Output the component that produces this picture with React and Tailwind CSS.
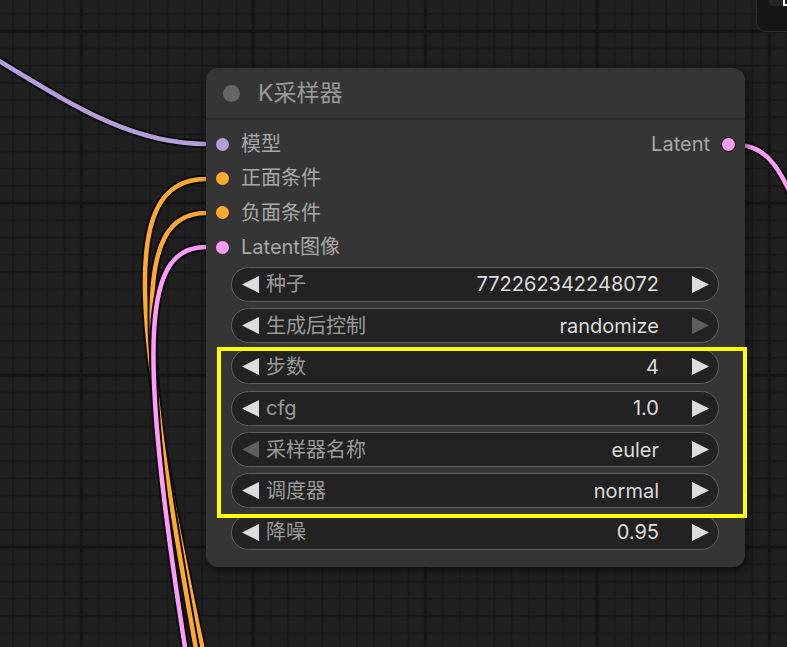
import React from "react";

const FONT = { fontFamily: 'Inter, "Noto Sans CJK SC", sans-serif' };

function LeftArrow({ dim }) {
  return (
    <svg width="17" height="17" viewBox="0 0 17 17" className="shrink-0">
      <polygon points="17,0 17,17 0,8.5" fill={dim ? "#5e5e5e" : "#dddddd"} />
    </svg>
  );
}
function RightArrow({ dim }) {
  return (
    <svg width="17" height="17" viewBox="0 0 17 17" className="shrink-0">
      <polygon points="0,0 0,17 17,8.5" fill={dim ? "#5e5e5e" : "#dddddd"} />
    </svg>
  );
}

function Widget({ label, value, dimLeft, dimRight }) {
  return (
    <div className="h-[35px] w-[488px] ml-[25px] rounded-full border-[1.5px] border-[#5f5f5f] bg-[#222222] flex items-center pl-[10px] pr-[9px]">
      <LeftArrow dim={dimLeft} />
      <span className="ml-[7px] text-[20px] text-[#9a9a9a] leading-none">{label}</span>
      <span className="ml-auto text-[20px] text-[#dddddd] leading-none mr-[33px]">{value}</span>
      <RightArrow dim={dimRight} />
    </div>
  );
}

function Input({ color, label }) {
  return (
    <div className="h-[34.3px] flex items-center pl-[9.5px]">
      <div className="w-[13px] h-[13px] rounded-full" style={{ background: color }} />
      <span className="ml-[12.5px] text-[20px] text-[#a8a8a8] leading-none">{label}</span>
    </div>
  );
}

export default function App() {
  return (
    <div className="relative w-[787px] h-[647px] overflow-hidden bg-[#1f1f1f]" style={FONT}>
      <svg className="absolute inset-0" width="787" height="647">
        <defs>
          <pattern id="minor" x="12" y="13.2" width="17.2" height="17.2" patternUnits="userSpaceOnUse">
            <rect x="0" y="0" width="17.2" height="1.5" fill="#181818" />
            <rect x="0" y="0" width="1.5" height="17.2" fill="#181818" />
          </pattern>
          <pattern id="major" x="79.8" y="29.8" width="172" height="172" patternUnits="userSpaceOnUse">
            <rect x="0" y="0" width="172" height="2.6" fill="#131313" />
            <rect x="0" y="0" width="2.6" height="172" fill="#131313" />
          </pattern>
        </defs>
        <rect width="787" height="647" fill="url(#minor)" />
        <rect width="787" height="647" fill="url(#major)" />
        <g fill="none" strokeLinecap="round">
          <path d="M -80 15 C 40 80, 110 144, 206 144" stroke="#0c0c0c" strokeWidth="8.5" />
          <path d="M -80 15 C 40 80, 110 144, 206 144" stroke="#b39ddb" strokeWidth="4.5" />
          <path d="M 206 179 C 115 179, 135 330, 205 660" stroke="#0c0c0c" strokeWidth="8.5" />
          <path d="M 206 179 C 115 179, 135 330, 205 660" stroke="#ffa931" strokeWidth="4.5" />
          <path d="M 206 213 C 130 213, 140 340, 198 660" stroke="#0c0c0c" strokeWidth="8.5" />
          <path d="M 206 213 C 130 213, 140 340, 198 660" stroke="#ffa931" strokeWidth="4.5" />
          <path d="M 206 247 C 145 247, 135 330, 187 660" stroke="#0c0c0c" strokeWidth="8.5" />
          <path d="M 206 247 C 145 247, 135 330, 187 660" stroke="#ff9cf9" strokeWidth="4.5" />
          <path d="M 737 145 C 765 145, 782 165, 805 230" stroke="#0c0c0c" strokeWidth="8.5" />
          <path d="M 737 145 C 765 145, 782 165, 805 230" stroke="#ff9cf9" strokeWidth="4.5" />
        </g>
      </svg>

      {/* top-right toolbar fragment */}
      <div className="absolute left-[756px] top-[-12px] w-[60px] h-[44px] rounded-[10px] bg-[#151515] border border-[#2e2e2e]">
        <div className="absolute left-[11px] top-[-4px] w-[40px] h-[21px] rounded-[6px] bg-[#232323]" />
        <div className="absolute left-[26px] top-[10px] w-[2px] h-[7px] bg-white" />
        <div className="absolute left-[26px] top-[15px] w-[6px] h-[2px] bg-white" />
      </div>

      {/* node */}
      <div className="absolute left-[206px] top-[68px] w-[539px] h-[499px] rounded-[12px] bg-[#353535] shadow-[2px_3px_8px_rgba(0,0,0,0.55)] flex flex-col">
        <div className="h-[52px] border-b-2 border-[#2a2a2a] flex items-center pl-[16.5px]">
          <div className="w-[17px] h-[17px] rounded-full bg-[#666666]" />
          <span className="ml-[18.5px] text-[23px] text-[#999999] leading-none">K采样器</span>
        </div>
        <div className="relative pt-[7px]">
          <Input color="#b39ddb" label="模型" />
          <Input color="#ffa931" label="正面条件" />
          <Input color="#ffa931" label="负面条件" />
          <Input color="#ff9cf9" label="Latent图像" />
          <div className="absolute right-[9px] top-[7px] h-[34.3px] flex items-center">
            <span className="text-[20px] text-[#a8a8a8] leading-none">Latent</span>
            <div className="ml-[11px] w-[15px] h-[15px] rounded-full bg-[#ff9cf9] border-[1.5px] border-black" />
          </div>
        </div>
        <div className="mt-[2.5px] flex flex-col gap-[6.33px]">
          <Widget label="种子" value="772262342248072" />
          <Widget label="生成后控制" value="randomize" dimRight />
          <Widget label="步数" value="4" />
          <Widget label="cfg" value="1.0" />
          <Widget label="采样器名称" value="euler" dimLeft />
          <Widget label="调度器" value="normal" />
          <Widget label="降噪" value="0.95" />
        </div>
      </div>

      {/* highlight */}
      <div className="absolute left-[216.5px] top-[347px] w-[530px] h-[171px] border-[4.5px] border-[#ffff00]" />
    </div>
  );
}
